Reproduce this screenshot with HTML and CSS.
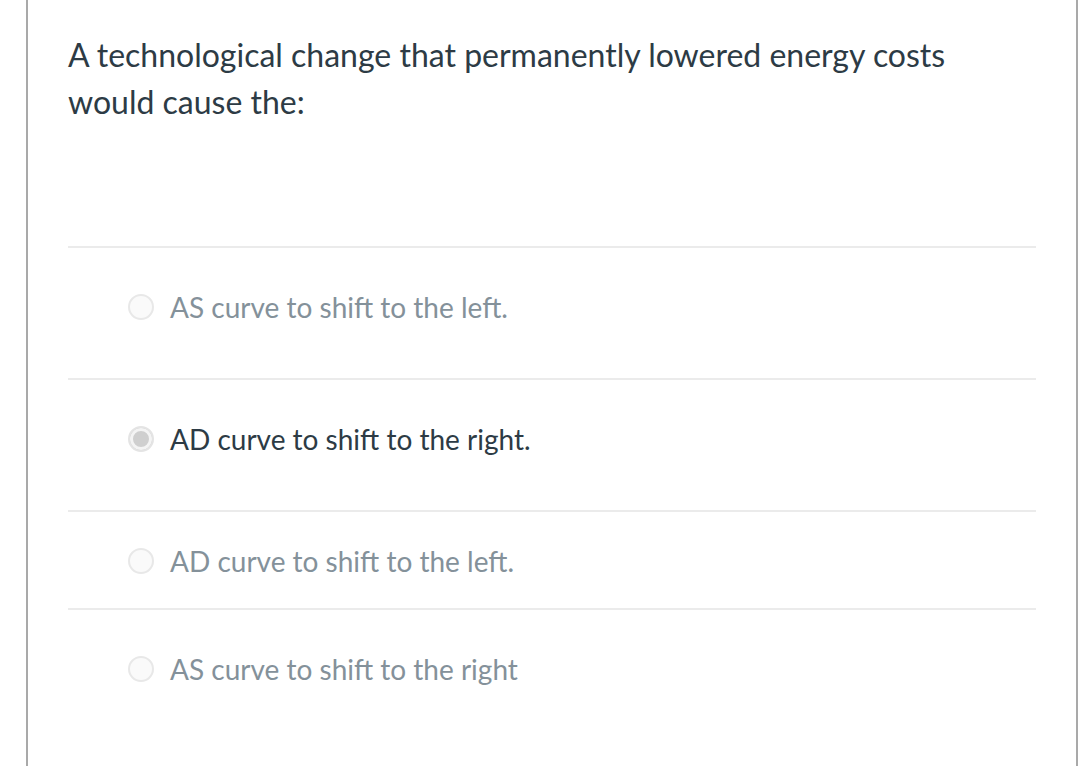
FILE: index.html
```html
<!DOCTYPE html>
<html>
<head>
<meta charset="utf-8">
<link rel="stylesheet" href="styles.css">
</head>
<body>
<div class="panel">
  <div class="question">A technological change that permanently lowered energy costs would cause the:</div>
  <div class="answers">
    <div class="answer row-tall">
      <span class="radio"></span>
      <span class="label">AS curve to shift to the left.</span>
    </div>
    <div class="answer row-tall selected">
      <span class="radio"></span>
      <span class="label">AD curve to shift to the right.</span>
    </div>
    <div class="answer row-short">
      <span class="radio"></span>
      <span class="label">AD curve to shift to the left.</span>
    </div>
    <div class="answer row-last">
      <span class="radio"></span>
      <span class="label">AS curve to shift to the right</span>
    </div>
  </div>
</div>
</body>
</html>
```
FILE: styles.css
```css
html, body {
  margin: 0;
  padding: 0;
  background: #fff;
  height: 100%;
}
body {
  font-family: Lato, "Open Sans", sans-serif;
  color: #2d3b45;
}
.panel {
  margin-left: 26px;
  width: 1052px;
  min-height: 766px;
  box-sizing: border-box;
  border-left: 2px solid #a9a9a9;
  border-right: 2px solid #a9a9a9;
  padding: 31px 40px 0 40px;
}
.question {
  font-size: 32px;
  line-height: 47px;
  width: 920px;
  height: 215px;
}
.answers {
  display: flex;
  flex-direction: column;
}
.answer {
  display: flex;
  align-items: center;
  gap: 16px;
  padding-left: 60px;
  border-top: 2px solid #ebebeb;
  font-size: 28px;
  line-height: 34px;
  color: #84919a;
}
.row-tall { padding-top: 42px; padding-bottom: 54px; }
.row-short { padding-top: 32px; padding-bottom: 30px; }
.row-last { padding-top: 42px; padding-bottom: 54px; }
.radio {
  width: 22px;
  height: 22px;
  border-radius: 50%;
  border: 2px solid #e8e8e8;
  background: #fafafa;
  box-sizing: content-box;
  flex: none;
}
.selected { color: #2d3b45; }
.selected .radio {
  background: #cfcfcf;
  border: 2px solid #e4e4e4;
  box-shadow: inset 0 0 0 3px #f4f4f4;
}
```
